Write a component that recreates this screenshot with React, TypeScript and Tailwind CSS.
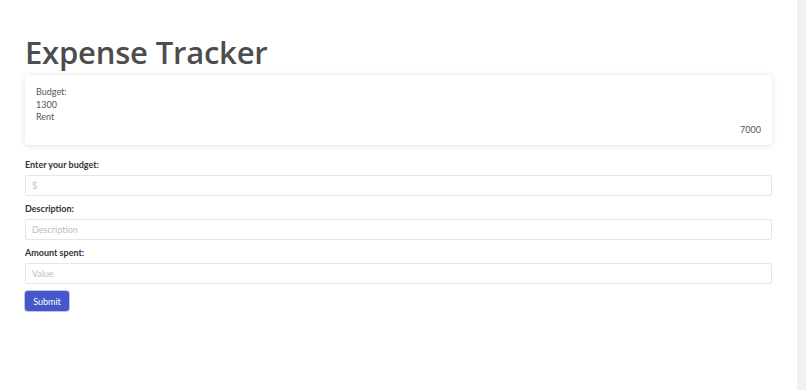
export default function App() {
  const inputCls =
    "mt-[3px] h-[21px] border border-[#e6e6e6] rounded-[2px] px-[6px] text-[9px] text-[#555] placeholder:text-[#c0c0c0] outline-none";
  const labelCls = "text-[9px] font-bold leading-[14px] text-[#333]";
  return (
    <div
      className="flex h-[390px] bg-white text-[#555]"
      style={{ fontFamily: 'Lato, "Noto Sans", sans-serif' }}
    >
      <div className="flex-1 px-[25px] pt-[30px]">
        <h1
          className="text-[31px] leading-[44px] font-semibold text-[#4d4d4d] tracking-[-0.2px]"
          style={{ fontFamily: '"Open Sans", "Noto Sans", sans-serif' }}
        >
          Expense Tracker
        </h1>
        <div className="mt-[1px] rounded-[4px] bg-white shadow-[0_1px_6px_rgba(0,0,0,0.12)] px-[11px] pt-[11px] pb-[9px] text-[9px] leading-[12.6px] text-[#555]">
          <div>Budget:</div>
          <div>1300</div>
          <div>Rent</div>
          <div className="text-right">7000</div>
        </div>
        <form className="mt-[13px] flex flex-col">
          <label className={labelCls}>Enter your budget:</label>
          <input placeholder="$" className={inputCls} />
          <label className={"mt-[6px] " + labelCls}>Description:</label>
          <input placeholder="Description" className={inputCls} />
          <label className={"mt-[6px] " + labelCls}>Amount spent:</label>
          <input placeholder="Value" className={inputCls} />
          <div className="mt-[7px] flex">
            <button
              type="button"
              className="h-[20px] w-[44px] rounded-[3px] bg-[#4658c9] text-white text-[9px] leading-none shadow-[0_0_0_1px_rgba(70,88,201,0.35)]"
            >
              Submit
            </button>
          </div>
        </form>
      </div>
      <div className="w-[9px] bg-[#f1f1f1]" />
    </div>
  );
}
